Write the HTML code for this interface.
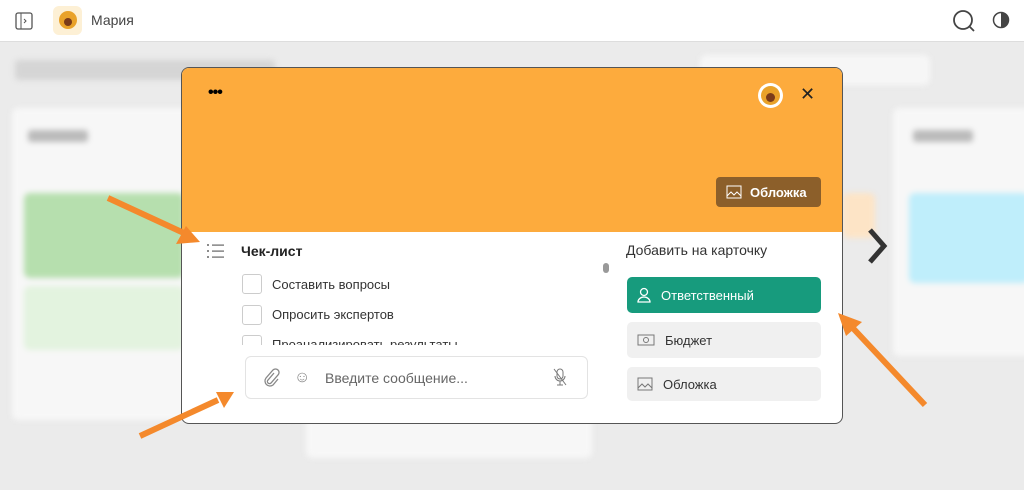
<!DOCTYPE html>
<html><head><meta charset="utf-8"><style>
*{box-sizing:border-box;margin:0;padding:0}
body{width:1024px;height:490px;overflow:hidden;background:#ebebeb;font-family:"Liberation Sans",sans-serif;position:relative}
.abs{position:absolute}
.top{left:0;top:0;width:1024px;height:42px;background:#fff;border-bottom:1px solid #ddd}
.blur{filter:blur(3px)}
.col{background:#f7f7f7;border-radius:6px}
.modal{left:181px;top:67px;width:662px;height:357px;background:#fff;border:1.5px solid #555;border-radius:8px;overflow:hidden}
.hdr{left:0;top:0;width:100%;height:164px;background:#fdab3d}
.btn{border-radius:5px;background:#f0f0f0;height:36px;width:194px;left:445px;font-size:13px;color:#333;display:flex;align-items:center;padding-left:10px;gap:10px}
.cb{width:20px;height:20px;border:1px solid #ccc;border-radius:3px;left:60px}
.ct{left:90px;font-size:13px;color:#333}
</style></head><body>
<div class="abs top">
 <svg class="abs" style="left:15px;top:12px" width="18" height="18"><rect x="1" y="1" width="16" height="16" rx="2" fill="none" stroke="#555" stroke-width="1.3"/><line x1="6" y1="1" x2="6" y2="17" stroke="#555"/><path d="M9 7l2 2-2 2" fill="none" stroke="#555"/></svg>
 <div class="abs" style="left:53px;top:6px;width:29px;height:29px;border-radius:6px;background:#fdf0d5"></div>
 <div class="abs" style="left:59px;top:11px;width:18px;height:18px;border-radius:50%;background:#e9a22a"></div>
 <div class="abs" style="left:64px;top:18px;width:8px;height:8px;border-radius:50%;background:#7a3b1a"></div>
 <div class="abs" style="left:91px;top:12px;font-size:14px;color:#444">Мария</div>
 <svg class="abs" style="left:952px;top:9px" width="24" height="24"><circle cx="11" cy="11" r="9" fill="none" stroke="#444" stroke-width="1.8"/><line x1="17" y1="17" x2="22" y2="22" stroke="#444" stroke-width="1.8"/></svg>
 <svg class="abs" style="left:992px;top:11px" width="18" height="18"><circle cx="9" cy="9" r="7.5" fill="none" stroke="#444" stroke-width="1.5"/><path d="M9 1.5a7.5 7.5 0 0 1 0 15z" fill="#444"/></svg>
</div>
<div class="blur">
 <div class="abs" style="left:15px;top:60px;width:260px;height:20px;background:#ccc;border-radius:4px;opacity:.7"></div>
 <div class="abs" style="left:700px;top:55px;width:230px;height:30px;background:#f6f6f6;border-radius:6px"></div>
 <div class="abs col" style="left:12px;top:108px;width:284px;height:312px"></div>
 <div class="abs col" style="left:306px;top:108px;width:286px;height:350px"></div>
 <div class="abs col" style="left:893px;top:108px;width:140px;height:248px"></div>
 <div class="abs" style="left:24px;top:193px;width:160px;height:85px;background:#b6dfae;border-radius:6px"></div>
 <div class="abs" style="left:24px;top:286px;width:160px;height:64px;background:#e3f3df;border-radius:6px"></div>
 <div class="abs" style="left:909px;top:193px;width:120px;height:90px;background:#bfeefb;border-radius:6px"></div>
 <div class="abs" style="left:843px;top:193px;width:32px;height:45px;background:#fde4c6;border-radius:6px"></div>
 <div class="abs" style="left:28px;top:130px;width:60px;height:12px;background:#bbb;border-radius:3px"></div>
 <div class="abs" style="left:913px;top:130px;width:60px;height:12px;background:#bbb;border-radius:3px"></div>
</div>
<div class="abs modal">
 <div class="abs hdr"></div>
 <div class="abs" style="left:26px;top:16px;font-size:16px;font-weight:bold;letter-spacing:-1px">•••</div>
 <div class="abs" style="left:576px;top:15px;width:25px;height:25px;border-radius:50%;background:#fff"></div>
 <div class="abs" style="left:579px;top:18px;width:19px;height:19px;border-radius:50%;background:#e9a22a"></div>
 <div class="abs" style="left:584px;top:25px;width:9px;height:9px;border-radius:50%;background:#7a3b1a"></div>
 <div class="abs" style="left:618px;top:16px;font-size:18px;color:#222">✕</div>
 <div class="abs" style="left:534px;top:109px;width:105px;height:30px;background:#8c5f2a;border-radius:4px;color:#fff;font-size:13px;font-weight:bold;display:flex;align-items:center;padding-left:10px;gap:8px">
  <svg width="16" height="14"><rect x="1" y="1" width="14" height="12" fill="none" stroke="#fff"/><path d="M1 11l4-4 3 3 3-3 4 4" fill="none" stroke="#fff"/></svg>Обложка</div>
 <svg class="abs" style="left:24px;top:174px" width="20" height="18"><g fill="#666"><circle cx="2" cy="3" r="1"/><circle cx="2" cy="9" r="1"/><circle cx="2" cy="15" r="1"/><rect x="6" y="2.5" width="12" height="1.2"/><rect x="6" y="8.5" width="12" height="1.2"/><rect x="6" y="14.5" width="12" height="1.2"/></g></svg>
 <div class="abs" style="left:59px;top:175px;font-size:14px;font-weight:bold;color:#222">Чек-лист</div>
 <div class="abs cb" style="top:206px"></div><div class="abs ct" style="top:209px">Составить вопросы</div>
 <div class="abs cb" style="top:237px"></div><div class="abs ct" style="top:239px">Опросить экспертов</div>
 <div class="abs" style="left:60px;top:267px;width:300px;height:10px;overflow:hidden"><div class="abs cb" style="left:0;top:0"></div><div class="abs" style="left:30px;top:2px;font-size:13px;color:#333">Проанализировать результаты</div></div>
 <div class="abs" style="left:421px;top:195px;width:6px;height:10px;border-radius:3px;background:#999"></div>
 <div class="abs" style="left:63px;top:288px;width:343px;height:43px;border:1px solid #e3e3e3;border-radius:6px"></div>
 <svg class="abs" style="left:80px;top:300px" width="18" height="20"><path d="M12 5l-6 7a2 2 0 0 0 3 3l7-8a3.5 3.5 0 0 0-5-5l-7 8a5 5 0 0 0 7 7l5-6" fill="none" stroke="#888" stroke-width="1.3"/></svg>
 <div class="abs" style="left:112px;top:301px;font-size:16px;color:#888">☺</div>
 <div class="abs" style="left:143px;top:302px;font-size:14px;color:#666">Введите сообщение...</div>
 <svg class="abs" style="left:370px;top:299px" width="16" height="20"><rect x="5" y="2" width="6" height="10" rx="3" fill="none" stroke="#777"/><path d="M3 9a5 5 0 0 0 10 0M8 14v4M5 18h6M2 2l12 16" fill="none" stroke="#777"/></svg>
 <div class="abs" style="left:444px;top:174px;font-size:14px;color:#333">Добавить на карточку</div>
 <div class="abs btn" style="top:209px;background:#179b7d;color:#fff"><svg width="14" height="16"><circle cx="7" cy="5" r="3.5" fill="none" stroke="#fff" stroke-width="1.3"/><path d="M1 15a6 5 0 0 1 12 0z" fill="none" stroke="#fff" stroke-width="1.3"/></svg>Ответственный</div>
 <div class="abs btn" style="top:254px"><svg width="18" height="14"><rect x="1" y="2" width="16" height="10" fill="none" stroke="#777"/><circle cx="9" cy="7" r="2.5" fill="none" stroke="#777"/></svg>Бюджет</div>
 <div class="abs btn" style="top:299px;height:34px"><svg width="16" height="14"><rect x="1" y="1" width="14" height="12" fill="none" stroke="#777"/><path d="M1 11l4-4 3 3 3-3 4 4" fill="none" stroke="#777"/></svg>Обложка</div>
</div>
<svg class="abs" style="left:0;top:0" width="1024" height="490">
 <path d="M870 230l14 16-14 16" fill="none" stroke="#333" stroke-width="5"/>
 <g stroke="#f4892c" stroke-width="6" fill="#f4892c">
  <line x1="108" y1="198" x2="186" y2="234"/><polygon points="200,242 176,244 186,226" stroke="none"/>
  <line x1="140" y1="436" x2="218" y2="400"/><polygon points="234,392 216,392 224,408" stroke="none"/>
  <line x1="925" y1="405" x2="850" y2="325"/><polygon points="838,313 862,322 846,336" stroke="none"/>
 </g>
</svg>
</body></html>
